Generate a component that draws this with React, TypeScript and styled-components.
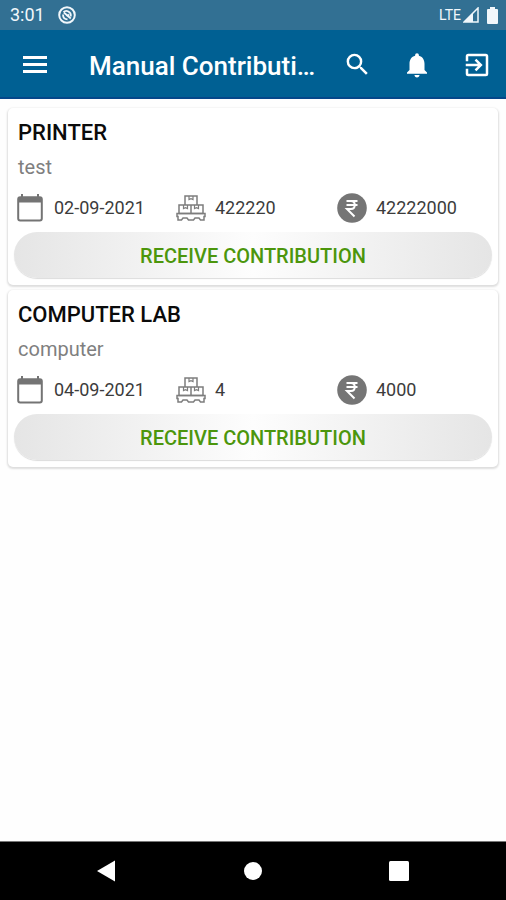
import React from "react";
import styled, { createGlobalStyle } from "styled-components";

const GlobalStyle = createGlobalStyle`
  * { box-sizing: border-box; }
  body { margin: 0; background: #fefefe; font-family: Roboto, sans-serif; }
  button { font-family: inherit; color: inherit; border: 0; padding: 0; background: none; cursor: pointer; }
  svg { display: block; }
`;

const Screen = styled.div`
  display: flex;
  flex-direction: column;
  min-height: 100vh;
`;

const StatusBar = styled.div`
  display: flex;
  align-items: center;
  justify-content: space-between;
  height: 30px;
  padding: 0 8px 0 10px;
  background: #327093;
  color: #f1f7fb;
`;

const StatusGroup = styled.div<{ $gap: number }>`
  display: flex;
  align-items: center;
  gap: ${(p) => p.$gap}px;
`;

const Clock = styled.span`
  font-size: 18px;
  line-height: 20px;
`;

const Network = styled.span`
  font-size: 14px;
  line-height: 20px;
`;

const AppBar = styled.header`
  display: flex;
  align-items: center;
  height: 69px;
  padding: 2px 14px 0 20px;
  background: #006093;
  border-bottom: 2px solid #05478a;
  color: #fff;
`;

const IconButton = styled.button`
  display: flex;
  align-items: center;
  justify-content: center;
  flex: none;
  width: 30px;
  height: 44px;
`;

const Title = styled.h1`
  flex: 1;
  min-width: 0;
  margin: 0 22px 0 39px;
  padding-top: 2px;
  overflow: hidden;
  white-space: nowrap;
  text-overflow: ellipsis;
  font-size: 26px;
  font-weight: 500;
  line-height: 32px;
`;

const Actions = styled.div`
  display: flex;
  gap: 30px;
`;

const List = styled.main`
  display: flex;
  flex: 1;
  flex-direction: column;
  gap: 5px;
  padding: 9px 8px;
`;

const Card = styled.article`
  padding: 10px 6px 7px;
  border-radius: 5px;
  background: #fff;
  box-shadow: 0 1px 2px 1px rgba(0, 0, 0, 0.13);
`;

const CardTitle = styled.h2`
  margin: 0 4px;
  color: #0b0b0b;
  font-size: 22px;
  font-weight: 500;
  line-height: 30px;
`;

const Description = styled.p`
  margin: 4px 4px 0;
  color: #7f7f7f;
  font-size: 20px;
  line-height: 30px;
`;

const Details = styled.div`
  display: grid;
  grid-template-columns: 159fr 161fr 158fr;
  margin: 11px 0 9px;
`;

const Detail = styled.div<{ $gap: number }>`
  display: flex;
  align-items: center;
  gap: ${(p) => p.$gap}px;
  height: 30px;
  color: #3c3c3c;
  font-size: 18px;
  line-height: 24px;
`;

const DetailIcon = styled.span`
  flex: none;
  padding-left: 3px;
`;

const ReceiveButton = styled.button`
  display: block;
  && {
    width: 100%;
    height: 46px;
    padding-top: 2px;
    border-radius: 23px;
    background: linear-gradient(90deg, #e5e5e5 0%, #fdfdfd 50%, #e5e5e5 100%);
    box-shadow: 0 1px 1px rgba(0, 0, 0, 0.14);
    color: #4c960c;
    font-size: 20px;
    font-weight: 500;
    line-height: 24px;
  }
`;

const NavBar = styled.nav`
  display: flex;
  align-items: center;
  justify-content: space-between;
  height: 59px;
  padding: 0 92px 0 91px;
  border-top: 1px solid #777;
  background: #000;
  color: #fff;
`;

const AppGlyph = () => (
  <svg width="18" height="18" viewBox="0 0 18 18" fill="none" stroke="currentColor" aria-hidden="true">
    <circle cx="9" cy="9" r="7.8" strokeWidth="2" />
    <path d="M5.5 6.200C8 3.500 13.500 5.500 12.800 10.500" strokeWidth="1.800" />
    <path d="M5 8.500c0 3 2 4.800 4.500 4.800M5.800 6.500l7 6" strokeWidth="1.800" />
    <path d="M8 9.500l3-1.500v3z" fill="currentColor" strokeWidth=".5" />
  </svg>
);

const SignalIcon = () => (
  <svg width="16" height="16" viewBox="0 0 16 16" aria-hidden="true">
    <path d="M15 1v14H1z" fill="none" stroke="currentColor" strokeWidth="1.5" />
    <path d="M10 6v9H1z" fill="currentColor" />
  </svg>
);

const BatteryIcon = () => (
  <svg width="11" height="17" viewBox="0 0 11 17" fill="currentColor" aria-hidden="true">
    <path d="M3 0h5v2h2q1 0 1 1v13q0 1-1 1H1q-1 0-1-1V3q0-1 1-1h2z" />
  </svg>
);

const MenuIcon = () => (
  <svg width="24" height="18" viewBox="0 0 24 18" fill="currentColor" aria-hidden="true">
    <path d="M0 0h24v3H0zM0 7h24v3H0zM0 14h24v3H0z" />
  </svg>
);

const SearchIcon = () => (
  <svg width="29" height="29" viewBox="0 0 24 24" fill="currentColor" aria-hidden="true">
    <path d="M15.5 14h-.79l-.28-.27A6.47 6.47 0 0 0 16 9.5 6.5 6.5 0 1 0 9.5 16c1.61 0 3.09-.59 4.23-1.57l.27.28v.79l5 4.99L20.49 19zm-6 0a4.5 4.5 0 1 1 0-9 4.5 4.5 0 0 1 0 9z" />
  </svg>
);

const BellIcon = () => (
  <svg width="30" height="30" viewBox="0 0 24 24" fill="currentColor" aria-hidden="true">
    <path d="M12 22c1.1 0 2-.9 2-2h-4c0 1.1.89 2 2 2zm6-6v-5c0-3.07-1.64-5.64-4.5-6.32V4a1.5 1.5 0 0 0-3 0v.68C7.63 5.36 6 7.92 6 11v5l-2 2v1h16v-1z" />
  </svg>
);

const ExitIcon = () => (
  <svg width="30" height="30" viewBox="0 0 24 24" fill="currentColor" aria-hidden="true">
    <path d="M10.09 15.59 11.5 17l5-5-5-5-1.41 1.41L12.67 11H3v2h9.67zM19 3H5a2 2 0 0 0-2 2v4h2V5h14v14H5v-4H3v4a2 2 0 0 0 2 2h14a2 2 0 0 0 2-2V5a2 2 0 0 0-2-2z" />
  </svg>
);

const CalendarIcon = () => (
  <svg width="26" height="28" viewBox="0 0 26 28" aria-hidden="true">
    <rect x="1.2" y="3.2" width="23.6" height="23.4" rx="2" fill="none" stroke="#747474" strokeWidth="2" />
    <path d="M2 3h22v5.5H2zM4 0h2v4H4zM20 0h2v4h-2z" fill="#747474" />
  </svg>
);

const PalletIcon = () => (
  <svg width="30" height="26" viewBox="0 0 30 26" fill="none" stroke="#7d7d7d" strokeWidth="1.5" aria-hidden="true">
    <path d="M9 1h12v9H9zM3 10h12v8.500H3zM15 10h12v8.500H15z" />
    <path d="M13 1v3.500l2-.8 2 .8V1M7.500 10v3.500l2-.8 2 .8V10M18.500 10v3.500l2-.8 2 .8V10" strokeWidth="1.200" />
    <path d="M1 18.500h28v3h-1v3.500h-3.500l-1.500-2h-4l-1.500 2h-5l-1.500-2H7l-1.500 2H2v-3.500H1z" />
  </svg>
);

const RupeeIcon = () => (
  <svg width="30" height="30" viewBox="0 0 30 30" aria-hidden="true">
    <circle cx="15" cy="15" r="14.800" fill="#757575" />
    <path d="M9.500 8h11M9.500 12h11M9.500 8h4.500c5 0 5 8 0 8H10l7.500 7.500" fill="none" stroke="#fff" strokeWidth="2" />
  </svg>
);

const BackIcon = () => (
  <svg width="18" height="22" viewBox="0 0 18 22" fill="currentColor" aria-hidden="true">
    <path d="M18 .5v21L0 11z" />
  </svg>
);

const HomeIcon = () => (
  <svg width="18" height="20" viewBox="0 0 18 20" fill="currentColor" aria-hidden="true">
    <circle cx="9" cy="10" r="9" />
  </svg>
);

const RecentIcon = () => (
  <svg width="20" height="20" viewBox="0 0 20 20" fill="currentColor" aria-hidden="true">
    <rect width="20" height="20" rx="1.500" />
  </svg>
);

const contributions = [
  { name: "PRINTER", description: "test", date: "02-09-2021", quantity: "422220", amount: "42222000" },
  { name: "COMPUTER LAB", description: "computer", date: "04-09-2021", quantity: "4", amount: "4000" },
];

export default function App() {
  return (
    <Screen>
      <GlobalStyle />
      <StatusBar>
        <StatusGroup $gap={13}>
          <Clock>3:01</Clock>
          <AppGlyph />
        </StatusGroup>
        <StatusGroup $gap={2}>
          <Network>LTE</Network>
          <StatusGroup $gap={8}>
            <SignalIcon />
            <BatteryIcon />
          </StatusGroup>
        </StatusGroup>
      </StatusBar>
      <AppBar>
        <IconButton aria-label="Open menu"><MenuIcon /></IconButton>
        <Title>Manual Contribution</Title>
        <Actions>
          <IconButton aria-label="Search"><SearchIcon /></IconButton>
          <IconButton aria-label="Notifications"><BellIcon /></IconButton>
          <IconButton aria-label="Log out"><ExitIcon /></IconButton>
        </Actions>
      </AppBar>
      <List>
        {contributions.map((item) => (
          <Card key={item.name}>
            <CardTitle>{item.name}</CardTitle>
            <Description>{item.description}</Description>
            <Details>
              <Detail $gap={11}><DetailIcon><CalendarIcon /></DetailIcon>{item.date}</Detail>
              <Detail $gap={9}><DetailIcon><PalletIcon /></DetailIcon>{item.quantity}</Detail>
              <Detail $gap={9}><DetailIcon><RupeeIcon /></DetailIcon>{item.amount}</Detail>
            </Details>
            <ReceiveButton>RECEIVE CONTRIBUTION</ReceiveButton>
          </Card>
        ))}
      </List>
      <NavBar aria-label="System navigation">
        <IconButton aria-label="Back"><BackIcon /></IconButton>
        <IconButton aria-label="Home"><HomeIcon /></IconButton>
        <IconButton aria-label="Recent apps"><RecentIcon /></IconButton>
      </NavBar>
    </Screen>
  );
}
